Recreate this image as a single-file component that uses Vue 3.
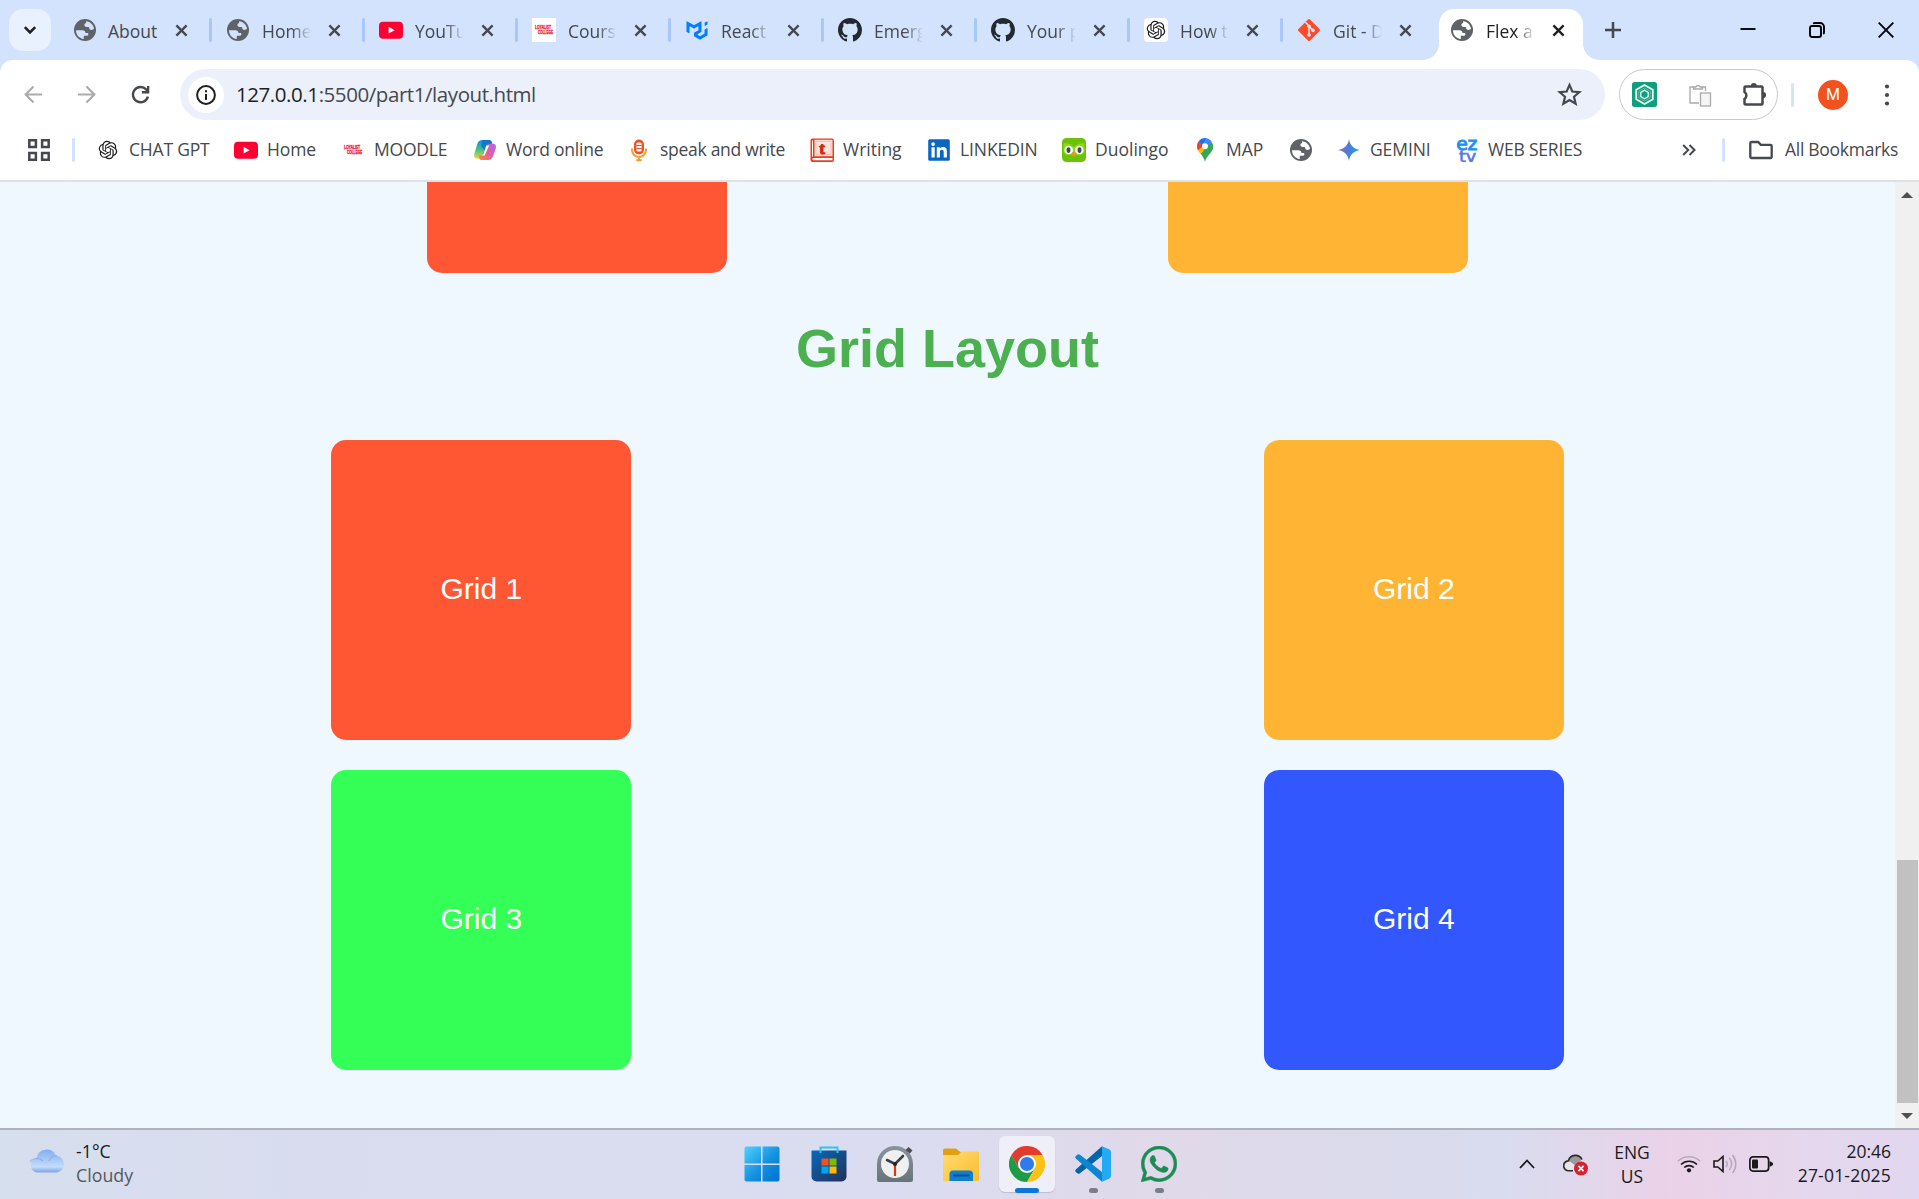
<script setup>
const tabs = [
  { icon: 'globe', title: 'About', whole: true },
  { icon: 'globe', title: 'Home' },
  { icon: 'youtube', title: 'YouTu' },
  { icon: 'college-tile', title: 'Cours' },
  { icon: 'mui', title: 'React' },
  { icon: 'github', title: 'Emerg' },
  { icon: 'github', title: 'Your p' },
  { icon: 'openai-tile', title: 'How t' },
  { icon: 'git', title: 'Git - D' },
  { icon: 'globe', title: 'Flex a', active: true },
]

const bookmarks = [
  { icon: 'openai', label: 'CHAT GPT', width: 138, fit: '-0.2px' },
  { icon: 'youtube', label: 'Home', width: 107, fit: '-0.1px' },
  { icon: 'college', label: 'MOODLE', width: 132, fit: '-0.2px' },
  { icon: 'copilot', label: 'Word online', width: 154, fit: '-0.22px' },
  { icon: 'mic', label: 'speak and write', width: 183, fit: '-0.28px' },
  { icon: 'writing', label: 'Writing', width: 117, fit: '0px' },
  { icon: 'linkedin', label: 'LINKEDIN', width: 135, fit: '-0.1px' },
  { icon: 'duolingo', label: 'Duolingo', width: 131, fit: '0px' },
  { icon: 'map', label: 'MAP', width: 96, fit: '0px' },
  { icon: 'globe', label: '', width: 48, fit: '0px' },
  { icon: 'gemini', label: 'GEMINI', width: 118, fit: '-0.1px' },
  { icon: 'eztv', label: 'WEB SERIES', width: 141, fit: '-0.2px' },
]

const cells = [
  { label: 'Grid 1', tone: 'red' },
  { label: 'Grid 2', tone: 'orange' },
  { label: 'Grid 3', tone: 'green' },
  { label: 'Grid 4', tone: 'blue' },
]

const apps = [
  { icon: 'start' },
  { icon: 'store' },
  { icon: 'clock' },
  { icon: 'folder' },
  { icon: 'chrome', state: 'active' },
  { icon: 'vscode', state: 'running' },
  { icon: 'whatsapp', state: 'running' },
]
</script>

<template>
  <div class="screen">
    <svg class="defs" width="0" height="0" aria-hidden="true">
      <defs>
        <linearGradient id="gGem" x1="0" y1="0" x2="1" y2="0">
          <stop offset="0" stop-color="#9168c0" /><stop offset=".5" stop-color="#4a7fd6" /><stop offset="1" stop-color="#1ba1e3" />
        </linearGradient>
        <linearGradient id="gWin" x1="0" y1="0" x2="1" y2="1">
          <stop offset="0" stop-color="#4fd2ff" /><stop offset=".55" stop-color="#1490df" /><stop offset="1" stop-color="#0070d0" />
        </linearGradient>
        <linearGradient id="gStore" x1="0" y1="0" x2="1" y2="1">
          <stop offset="0" stop-color="#0669bd" /><stop offset="1" stop-color="#243056" />
        </linearGradient>
        <linearGradient id="gCloud" x1="0" y1="0" x2="0" y2="1">
          <stop offset="0" stop-color="#82aef0" /><stop offset=".75" stop-color="#c3dcf9" /><stop offset="1" stop-color="#7ba2e8" />
        </linearGradient>
        <linearGradient id="gFold" x1="0" y1="0" x2="1" y2="1">
          <stop offset="0" stop-color="#ffdc73" /><stop offset="1" stop-color="#f9bd2b" />
        </linearGradient>
        <linearGradient id="gClock" x1="0" y1="0" x2="0" y2="1">
          <stop offset="0" stop-color="#8a949c" /><stop offset="1" stop-color="#69737a" />
        </linearGradient>
        <linearGradient id="gCopA" x1="0" y1="0" x2="0" y2="1">
          <stop offset="0" stop-color="#0f8fe8" /><stop offset=".5" stop-color="#3fbf8e" /><stop offset="1" stop-color="#f3d338" />
        </linearGradient>
        <linearGradient id="gCopB" x1="1" y1="0" x2="0" y2="1">
          <stop offset="0" stop-color="#a96bf0" /><stop offset=".5" stop-color="#e65c9c" /><stop offset="1" stop-color="#f98a3c" />
        </linearGradient>

        <symbol id="i-globe" viewBox="0 0 24 24">
          <circle cx="12" cy="12" r="11" fill="#5f6368" />
          <path class="cut" d="M13.100 3.200c4.200.5 7.400 3.400 7.900 7.400-.6 1-1.500 1.400-2.600 1.400-1.500 0-2.200-.9-2.200-2.200 0-.5-.4-.8-.9-.8h-1.600c-1.300 0-2.300-.8-2.300-2 0-1.100.7-1.800 1.700-2z" />
          <path class="cut" d="M3 12.200h6.300c2 0 3.200 1.100 3.200 2.800h1.900c.7 0 1 .5 1 1.100 0 .9-.5 1.600-1.400 1.600h-3.200v3.200C6.300 20.500 3 16.800 3 12.200z" />
        </symbol>
        <symbol id="i-youtube" viewBox="0 0 24 24">
          <rect y="3.700" width="24" height="17" rx="4" fill="#ff0033" /><path d="M9.600 8.800v6.800l6-3.400z" fill="#fff" />
        </symbol>
        <symbol id="i-college" viewBox="0 0 24 24">
          <g fill="#ee1c3c" font-family="Liberation Sans, sans-serif" font-weight="700" font-size="5.400" stroke="#ee1c3c" stroke-width=".35">
            <text x="3" y="11.300" textLength="16" lengthAdjust="spacingAndGlyphs">LOYALIST</text>
            <text x="6" y="16" textLength="15" lengthAdjust="spacingAndGlyphs">COLLEGE</text>
          </g>
        </symbol>
        <symbol id="i-college-tile" viewBox="0 0 24 24">
          <rect width="24" height="24" fill="#fff" /><use href="#i-college" />
        </symbol>
        <symbol id="i-mui" viewBox="-2.500 -5 41 41">
          <path fill="#007fff" d="M30.343 21.976a1 1 0 00.502-.864l.018-5.787a1 1 0 01.502-.864l3.137-1.802a1 1 0 011.498.867v10.521a1 1 0 01-.502.867l-11.839 6.8a1 1 0 01-.994.001l-9.291-5.314a1 1 0 01-.504-.868v-5.305l7.670-4.420v-5.230a1 1 0 00-1.500-.870l-5.687 3.277a1 1 0 01-.998 0L6.666 9.700a1 1 0 00-1.499.866v9.400a1 1 0 01-1.496.869l-3.166-1.810a1 1 0 01-.504-.870l.028-16.430A1 1 0 011.527.860l10.845 6.229a1 1 0 00.996 0L24.210.860a1 1 0 011.498.868v16.434a1 1 0 01-.501.867l-5.678 3.270a1 1 0 00.004 1.735l3.132 1.783a1 1 0 00.993-.002l6.685-3.839zM31 7.234a1 1 0 001.514.857l3-1.800A1 1 0 0036 5.434V1.766A1 1 0 0034.486.910l-3 1.800a1 1 0 00-.486.857v3.668z" />
        </symbol>
        <symbol id="i-github" viewBox="0 0 16 16">
          <path fill="#24292f" d="M8 0C3.580 0 0 3.580 0 8c0 3.540 2.290 6.530 5.470 7.590.4.070.55-.170.55-.380 0-.190-.010-.820-.010-1.490-2.010.370-2.530-.490-2.690-.940-.090-.230-.480-.940-.820-1.130-.280-.150-.680-.520-.010-.530.630-.010 1.080.580 1.230.820.720 1.210 1.870.870 2.330.660.070-.520.280-.870.510-1.070-1.780-.200-3.640-.890-3.640-3.950 0-.870.310-1.590.820-2.150-.080-.200-.360-1.020.080-2.120 0 0 .670-.210 2.200.820.640-.180 1.320-.270 2-.270s1.360.090 2 .270c1.530-1.040 2.200-.820 2.200-.820.440 1.100.160 1.920.080 2.120.510.560.820 1.270.820 2.150 0 3.070-1.870 3.750-3.650 3.950.290.250.540.730.540 1.480 0 1.070-.010 1.930-.010 2.200 0 .210.150.460.550.380A8.010 8.010 0 0 0 16 8c0-4.420-3.580-8-8-8z" />
        </symbol>
        <symbol id="i-openai" viewBox="-3.500 -3.500 31 31">
          <path fill="currentColor" d="M22.2819 9.8211a5.9847 5.9847 0 0 0-.5157-4.9108 6.0462 6.0462 0 0 0-6.5098-2.9A6.0651 6.0651 0 0 0 4.9807 4.1818a5.9847 5.9847 0 0 0-3.9977 2.9 6.0462 6.0462 0 0 0 .7427 7.0966 5.98 5.98 0 0 0 .511 4.9107 6.051 6.051 0 0 0 6.5146 2.9001A5.9847 5.9847 0 0 0 13.2599 24a6.0557 6.0557 0 0 0 5.7718-4.2058 5.9894 5.9894 0 0 0 3.9977-2.9001 6.0557 6.0557 0 0 0-.7475-7.0729zm-9.022 12.6081a4.4755 4.4755 0 0 1-2.8764-1.0408l.1419-.0804 4.7783-2.7582a.7948.7948 0 0 0 .3927-.6813v-6.7369l2.02 1.1686a.071.071 0 0 1 .038.052v5.5826a4.504 4.504 0 0 1-4.4945 4.4944zm-9.6607-4.1254a4.4708 4.4708 0 0 1-.5346-3.0137l.142.0852 4.783 2.7582a.7712.7712 0 0 0 .7806 0l5.8428-3.3685v2.3324a.0804.0804 0 0 1-.0332.0615L9.74 19.9502a4.4992 4.4992 0 0 1-6.1408-1.6464zM2.3408 7.8956a4.485 4.485 0 0 1 2.3655-1.9728V11.6a.7664.7664 0 0 0 .3879.6765l5.8144 3.3543-2.0201 1.1685a.0757.0757 0 0 1-.071 0l-4.8303-2.7865A4.504 4.504 0 0 1 2.3408 7.872zm16.5963 3.8558L13.1038 8.364 15.1192 7.2a.0757.0757 0 0 1 .071 0l4.8303 2.7913a4.4944 4.4944 0 0 1-.6765 8.1042v-5.6772a.79.79 0 0 0-.407-.667zm2.0107-3.0231l-.142-.0852-4.7735-2.7818a.7759.7759 0 0 0-.7854 0L9.409 9.2297V6.8974a.0662.0662 0 0 1 .0284-.0615l4.8303-2.7866a4.4992 4.4992 0 0 1 6.6802 4.66zM8.3065 12.863l-2.02-1.1638a.0804.0804 0 0 1-.038-.0567V6.0742a4.4992 4.4992 0 0 1 7.3757-3.4537l-.142.0805L8.704 5.459a.7948.7948 0 0 0-.3927.6813zm1.0976-2.3654l2.602-1.4998 2.6069 1.4998v2.9994l-2.5974 1.4997-2.6067-1.4997Z" />
        </symbol>
        <symbol id="i-openai-tile" viewBox="0 0 24 24">
          <rect width="24" height="24" rx="4" fill="#fff" /><use href="#i-openai" />
        </symbol>
        <symbol id="i-git" viewBox="0 0 24 24">
          <rect x="3.800" y="3.800" width="16.400" height="16.400" rx="1.500" transform="rotate(45 12 12)" fill="#ff4a26" />
          <path d="M8.300 4.200l3.700 3.600v9M12 8.200l4 4.200" fill="none" stroke="#dbe6fd" stroke-width="1.500" />
          <circle cx="12" cy="8.200" r="1.800" fill="#dbe6fd" /><circle cx="16" cy="12.400" r="1.800" fill="#dbe6fd" /><circle cx="12" cy="17" r="1.800" fill="#dbe6fd" />
        </symbol>
        <symbol id="i-copilot" viewBox="0 0 24 24">
          <path d="M9.500 2h6.500c1.500 0 2.300.8 2.800 2.300l.7 2.700h-3.200c-1.700 0-2.500 1-3 2.600L10.800 18c-.5 1.700-1.400 2.500-3 2.500H4.500C1.700 20.500.6 18.500 1.400 15.500L4.300 6C5 3.400 6.800 2 9.500 2z" fill="url(#gCopA)" />
          <path d="M9.500 2h6.500c1.500 0 2.300.8 2.800 2.300l.7 2.700h-3.200c-1.700 0-2.500 1-3 2.600l-1 3.400L8 8z" fill="#1268c9" opacity=".75" />
          <path d="M14.500 22H9c-1.600 0-2.400-.9-2.900-2.300l-.6-2.200h2.700c1.700 0 2.500-.8 3-2.500l1.900-6.300c.6-1.900 1.700-2.900 3.600-2.900h3c2.800 0 3.900 1.900 3 5l-2.500 7c-.9 2.800-2.700 4.200-5.700 4.200z" fill="url(#gCopB)" />
          <path d="M13.200 7.500h3l-4.600 10H8c1.700 0 2.500-.8 3-2.500z" fill="#fff" />
        </symbol>
        <symbol id="i-mic" viewBox="0 0 24 24">
          <rect x="7" y="1.500" width="10" height="15" rx="5" fill="#f4511e" />
          <rect x="9.400" y="4.500" width="5.200" height="9" rx="1.600" fill="#fff" />
          <path d="M9.400 7.500h5.200M9.400 10.500h5.200" stroke="#f4511e" stroke-width="1.200" />
          <path d="M5 10.500v1.500a7 7 0 0 0 14 0v-1.500M12 18.500v4M9.300 22.300h5.400" stroke="#f99b32" stroke-width="2" fill="none" />
        </symbol>
        <symbol id="i-writing" viewBox="0 0 24 24">
          <rect x=".5" y=".5" width="23.500" height="23.500" rx="2" fill="#ef3a1b" />
          <path d="M4.500 1.800h18v16.400h-18z" fill="#fbe3dd" /><path d="M3.500 20h19v2.200H3.300c-1.300 0-1.300-2.200.2-2.200z" fill="#fff" /><path d="M2 2.500h1v16H2z" fill="#fff" />
          <path d="M6 3.500h15v13H6z" fill="none" stroke="#f9b9aa" stroke-width=".8" />
          <text x="9.200" y="15.500" font-family="Liberation Serif, serif" font-weight="700" font-size="17" fill="#d6240c" stroke="#d6240c">t</text>
        </symbol>
        <symbol id="i-linkedin" viewBox="0 0 24 24">
          <rect x="1.200" y="1.200" width="21.600" height="21.600" rx="1.500" fill="#0a66c2" />
          <path d="M4.500 9.300h3.200v10.200H4.500zM9.800 9.300h3v1.400c.6-1 1.700-1.700 3.300-1.700 3.100 0 3.800 2 3.800 4.800v5.700h-3.200v-5c0-1.400-.1-2.700-1.800-2.700s-2 1.300-2 2.700v5H9.800z" fill="#fff" /><circle cx="6.100" cy="6.100" r="1.850" fill="#fff" />
        </symbol>
        <symbol id="i-duolingo" viewBox="0 0 24 24">
          <rect width="24" height="24" rx="4.500" fill="#6cc204" /><path d="M1.500 5.500C5 4.500 9 5.500 12 9c3-3.500 7-4.500 10.500-3.500v9c-3 4-8 3-10.500 1-2.500 2-7.500 3-10.500-1z" fill="#86db1b" />
          <ellipse cx="6.700" cy="12" rx="4.300" ry="4.300" fill="#fff" /><ellipse cx="17.300" cy="12" rx="4.300" ry="4.300" fill="#fff" />
          <ellipse cx="6.500" cy="12.100" rx="2" ry="2.800" fill="#43484c" /><ellipse cx="17.500" cy="12.100" rx="2" ry="2.800" fill="#43484c" />
          <path d="M9.300 15.300q2.700-2.200 5.400 0-.7 3-2.700 3t-2.700-3z" fill="#f5921e" />
        </symbol>
        <symbol id="i-map" viewBox="0 0 24 24">
          <path d="M12 24c-.8-3.200-2-5.500-4.500-8.300L17.500 4a8 8 0 0 1 1.500 8.800C17 16.500 13.200 18.500 12 24z" fill="#34a853" />
          <path d="M7.500 15.700C5 12.800 3.700 11 4 8l8.500-2.500 2.300 2.500z" fill="#fbbc04" />
          <path d="M4 8c0-1.800.7-3.600 1.800-4.900l5 4.300L5 12.300C4.300 11 4 9.500 4 8z" fill="#ea4335" />
          <path d="M5.800 3.100a8.100 8.100 0 0 1 8.600-2.700L9.200 7z" fill="#1a73e8" /><path d="M14.400.4c2 .6 3.700 2 4.600 4L13.500 9.800 9 7z" fill="#4285f4" />
          <path d="M19 4.400a8 8 0 0 1-.2 8.400L12 15l-1.500-3z" fill="#34a853" />
          <circle cx="12" cy="8.300" r="3" fill="#fff" />
        </symbol>
        <symbol id="i-gemini" viewBox="0 0 24 24">
          <path d="M12 1c.7 6 5 10.300 11 11-6 .7-10.300 5-11 11-.7-6-5-10.300-11-11 6-.7 10.300-5 11-11z" fill="url(#gGem)" />
        </symbol>
        <symbol id="i-eztv" viewBox="0 0 24 24">
          <g font-family="DejaVu Sans, sans-serif" font-size="18">
            <text x="1.200" y="11.500" fill="#1b8ff5" stroke="#1b8ff5" stroke-width=".9" textLength="21" lengthAdjust="spacingAndGlyphs">ez</text>
            <text x="4" y="23.500" font-size="16" textLength="17" lengthAdjust="spacingAndGlyphs" fill="#5577e8" stroke="#5577e8" stroke-width=".6">tv</text>
          </g>
        </symbol>

        <symbol id="i-start" viewBox="0 0 36 36">
          <path d="M2.500.5H17v17H.5v-15a2 2 0 0 1 2-2zM18.500.5h15a2 2 0 0 1 2 2v15h-17zM.5 19H17v16.500H2.500a2 2 0 0 1-2-2zM18.500 19h17v14.500a2 2 0 0 1-2 2h-15z" fill="url(#gWin)" />
        </symbol>
        <symbol id="i-store" viewBox="0 0 36 36">
          <path d="M.5 4.500h35v26a5 5 0 0 1-5 5h-25a5 5 0 0 1-5-5z" fill="url(#gStore)" />
          <path d="M9.500 7V1.500h17V7" fill="none" stroke="#2fc4f4" stroke-width="2" />
          <path d="M10.500 12.500h7v7h-7z" fill="#f25022" /><path d="M18.500 12.500h7v7h-7z" fill="#7fba00" /><path d="M10.500 20.500h7v7h-7z" fill="#00a4ef" /><path d="M18.500 20.500h7v7h-7z" fill="#ffb900" />
        </symbol>
        <symbol id="i-clock" viewBox="0 0 36 36">
          <path d="M0 18a18 18 0 0 1 36 0v16a2 2 0 0 1-2 2H2a2 2 0 0 1-2-2z" fill="url(#gClock)" />
          <path d="M28.500 4l3-3 4 3.500-2.700 3z" fill="#4b4f52" />
          <circle cx="18" cy="18" r="14" fill="#eef0f1" />
          <path d="M18 18v12" stroke="#d83b01" stroke-width="2.200" /><path d="M10 14l8 4 8-8" fill="none" stroke="#3b3f42" stroke-width="2.600" stroke-linecap="round" /><circle cx="18" cy="18" r="2" fill="#222" />
        </symbol>
        <symbol id="i-folder" viewBox="0 0 36 36">
          <path d="M0 4.500a2 2 0 0 1 2-2h11l5 4v6H0z" fill="#e0a010" />
          <path d="M0 9h15l4-3.500h15.500a1.500 1.500 0 0 1 1.500 1.500v26.500a1.500 1.500 0 0 1-1.500 1.500h-33A1.500 1.500 0 0 1 0 33.500z" fill="url(#gFold)" />
          <path d="M6.500 35v-7a3.500 3.500 0 0 1 3.500-3.500h16.500A3.500 3.500 0 0 1 30 28v7z" fill="#0f7fd0" /><path d="M11 29.500h14.500" stroke="#0a4f92" stroke-width="2" stroke-linecap="round" />
        </symbol>
        <symbol id="i-chrome" viewBox="0 0 36 36">
          <path d="M2.400 9a18 18 0 0 0 15.600 27l7.800-13.500L18 18l-7.800 4.500z" fill="#1f9a47" />
          <path d="M33.600 9A18 18 0 0 1 18 36l7.800-13.500L18 9z" fill="#fbc116" />
          <path d="M2.400 9a18 18 0 0 1 31.200 0H18v9l-7.800 4.500z" fill="#e33b2e" />
          <circle cx="18" cy="18" r="9" fill="#fff" /><circle cx="18" cy="18" r="7.100" fill="#2f7bee" />
        </symbol>
        <symbol id="i-vscode" viewBox="0 0 36 36">
          <path d="M27 .2L.8 23.500a2 2 0 0 0 0 2.600l1.200 1a2.400 2.400 0 0 0 3 .1L27 10z" fill="#0065a9" />
          <path d="M27 35.800L.8 12.500a2 2 0 0 1 0-2.600L2 8.900a2.400 2.400 0 0 1 3-.1L27 26z" fill="#0d86cf" />
          <path d="M27 .2L34.500 3.600A2.600 2.600 0 0 1 36 6v24a2.600 2.600 0 0 1-1.500 2.400L27 35.800z" fill="#24a9f2" />
        </symbol>
        <symbol id="i-whatsapp" viewBox="0 0 24 24">
          <path fill="#1c8b54" stroke="#1c8b54" stroke-width=".3" d="M17.472 14.382c-.297-.149-1.758-.867-2.030-.967-.273-.099-.471-.148-.670.150-.197.297-.767.966-.940 1.164-.173.199-.347.223-.644.075-.297-.150-1.255-.463-2.390-1.475-.883-.788-1.480-1.761-1.653-2.059-.173-.297-.018-.458.130-.606.134-.133.298-.347.446-.520.149-.174.198-.298.298-.497.099-.198.050-.371-.025-.520-.075-.149-.669-1.612-.916-2.207-.242-.579-.487-.500-.669-.510-.173-.008-.371-.010-.570-.010-.198 0-.520.074-.792.372-.272.297-1.040 1.016-1.040 2.479 0 1.462 1.065 2.875 1.213 3.074.149.198 2.096 3.200 5.077 4.487.709.306 1.262.489 1.694.625.712.227 1.360.195 1.871.118.571-.085 1.758-.719 2.006-1.413.248-.694.248-1.289.173-1.413-.074-.124-.272-.198-.570-.347m-5.421 7.403h-.004a9.870 9.870 0 01-5.031-1.378l-.361-.214-3.741.982.998-3.648-.235-.374a9.860 9.860 0 01-1.510-5.260c.001-5.450 4.436-9.884 9.888-9.884 2.640 0 5.122 1.030 6.988 2.898a9.825 9.825 0 012.893 6.994c-.003 5.450-4.437 9.884-9.885 9.884m8.413-18.297A11.815 11.815 0 0012.050 0C5.495 0 .160 5.335.157 11.892c0 2.096.547 4.142 1.588 5.945L.057 24l6.305-1.654a11.882 11.882 0 005.683 1.448h.005c6.554 0 11.890-5.335 11.893-11.893a11.821 11.821 0 00-3.480-8.413z" />
        </symbol>
      </defs>
    </svg>

    <header class="tabstrip">
      <button class="tab-search">
        <svg width="14" height="10" viewBox="0 0 14 10"><path d="M1.800 2.200L7 7.400l5.200-5.200" fill="none" stroke="#1f1f1f" stroke-width="2.600" /></svg>
      </button>
      <div class="tabs">
        <div v-for="(tab, i) in tabs" :key="i" class="tab" :class="{ active: tab.active, whole: tab.whole }">
          <svg class="fav"><use :href="'#i-' + tab.icon" /></svg>
          <span class="tab-title">{{ tab.title }}</span>
          <svg class="tab-close" viewBox="0 0 14 14"><path d="M1.500 1.500l11 11M12.500 1.500l-11 11" /></svg>
          <i class="tab-sep"></i>
        </div>
      </div>
      <svg class="new-tab" viewBox="0 0 16 16"><path d="M8 0v16M0 8h16" stroke="#45484d" stroke-width="2.500" /></svg>
      <div class="window-controls">
        <svg viewBox="0 0 16 16"><path d="M.5 7h15" /></svg>
        <svg viewBox="0 0 16 16"><rect x="1" y="4" width="11" height="11" rx="2" /><path d="M4 1.500Q5 1 6.500 1H11a4 4 0 0 1 4 4v5q0 1.500-.7 2" /></svg>
        <svg viewBox="0 0 16 16"><path d="M.7.7l14.600 14.600M15.300.7L.7 15.300" /></svg>
      </div>
    </header>

    <div class="chrome-panel">
      <div class="toolbar">
        <svg class="nav dim" viewBox="0 0 20 20"><path d="M19 10H2M10 1.500L1.700 10l8.300 8.500" /></svg>
        <svg class="nav dim" viewBox="0 0 20 20"><path d="M1 10h17M10 1.500l8.300 8.500-8.300 8.500" /></svg>
        <svg class="nav" viewBox="0 0 20 20"><path d="M17.800 12.300A8 8 0 1 1 16 4.700L17.800 6.800M18 1v6.600h-6.500" stroke-width="2.500" /></svg>
        <div class="omnibox">
          <span class="site-info">
            <svg width="20" height="20" viewBox="0 0 20 20"><circle cx="10" cy="10" r="8.900" fill="none" stroke="#1f1f1f" stroke-width="2" /><path d="M10 9v6M10 5.200v2" stroke="#1f1f1f" stroke-width="2" /></svg>
          </span>
          <span class="url"><b>127.0.0.1</b>:5500/part1/layout.html</span>
          <svg class="star" viewBox="0 0 24 24"><path d="M12 2.800l2.700 6.300 6.800.6-5.200 4.500 1.600 6.700L12 17.300l-5.900 3.600 1.600-6.700-5.200-4.500 6.800-.6z" /></svg>
        </div>
        <div class="extensions">
          <svg width="25" height="25" viewBox="0 0 25 25">
            <rect width="25" height="25" rx="2.500" fill="#109f7c" />
            <g fill="none" stroke="#e9f7f2"><path d="M12.500 3l8.300 4.700v9.600L12.500 22l-8.300-4.700V7.700z" stroke-width="1.800" /><path d="M12.500 8.300l3.700 2.100v4.200l-3.700 2.100-3.700-2.100v-4.200z" stroke-width="1.300" /><path d="M12.500 6l5.700 3.200v6.600L12.500 19l-5.700-3.200V9.200z" stroke-width=".6" opacity=".6" /></g>
          </svg>
          <svg class="clip" width="24" height="24" viewBox="0 0 24 24" fill="none" stroke="#a9a9a9" stroke-width="1.300">
            <path d="M11 20H2V4h4M14 4h3.500v4" /><path d="M5.500 6V4h2.200a2.500 2.500 0 0 1 4.600 0h2.200v2z" /><rect x="12.500" y="10" width="10" height="13" fill="#f5f5f5" />
          </svg>
          <svg width="26" height="26" viewBox="0 0 26 26">
            <path d="M4.500 4.500h16a1 1 0 0 1 1 1v16a1 1 0 0 1-1 1h-16a1 1 0 0 1-1-1V17a4.200 4.200 0 0 0 0-7V5.500a1 1 0 0 1 1-1z" fill="none" stroke="#45484d" stroke-width="2.500" />
            <path d="M9.800 4a3 3 0 0 1 6 0zM22 10a3 3 0 0 1 0 6.200z" fill="#45484d" />
          </svg>
        </div>
        <i class="divider"></i>
        <span class="avatar">M</span>
        <svg class="kebab" viewBox="0 0 6 24"><circle cx="3" cy="3.500" r="2.100" /><circle cx="3" cy="12" r="2.100" /><circle cx="3" cy="20.500" r="2.100" /></svg>
      </div>

      <div class="bookmarks">
        <svg class="apps-grid" viewBox="0 0 22 22"><path d="M1.300 1.300h6.600v6.600H1.300zM14.100 1.300h6.600v6.600h-6.600zM1.300 14.100h6.600v6.600H1.300zM14.100 14.100h6.600v6.600h-6.600z" fill="none" stroke="#45484d" stroke-width="2.500" /></svg>
        <i class="divider"></i>
        <div class="bookmark-list">
          <div v-for="(b, i) in bookmarks" :key="i" class="bookmark" :style="{ width: b.width + 'px', letterSpacing: b.fit }">
            <svg class="fav"><use :href="'#i-' + b.icon" /></svg>
            <span>{{ b.label }}</span>
          </div>
        </div>
        <svg class="more" viewBox="0 0 14 12"><path d="M1.200 1l5 5-5 5M7.500 1l5 5-5 5" fill="none" stroke="#45484d" stroke-width="2" /></svg>
        <i class="divider"></i>
        <svg class="all-icon" viewBox="0 0 24 20"><path d="M2.500 2h6.700l2.600 2.800h9.700a1.200 1.200 0 0 1 1.200 1.200v10.800a1.200 1.200 0 0 1-1.200 1.200h-19a1.200 1.200 0 0 1-1.200-1.200V3.200A1.200 1.200 0 0 1 2.500 2z" fill="none" stroke="#45484d" stroke-width="2.300" /></svg>
        <span class="all-label">All Bookmarks</span>
      </div>
    </div>

    <main class="viewport">
      <div class="page">
        <section class="flex-row">
          <div class="box clipped red"></div>
          <div class="box clipped orange"></div>
        </section>
        <h1>Grid Layout</h1>
        <section class="grid">
          <div v-for="c in cells" :key="c.label" class="box" :class="c.tone">{{ c.label }}</div>
        </section>
      </div>
      <div class="scrollbar">
        <i class="arrow up"></i>
        <i class="thumb"></i>
        <i class="arrow down"></i>
      </div>
    </main>

    <footer class="taskbar">
      <div class="weather">
        <svg width="36" height="24" viewBox="0 0 36 24"><path d="M7.500 23.500a7.500 7.500 0 0 1 0-14.500 10.300 10.300 0 0 1 19.400-2.500A8.600 8.600 0 0 1 28 23.500z" fill="url(#gCloud)" /><path d="M1 13c2-4 9-5 13-1" fill="none" stroke="#7ba6ee" stroke-width="1.200" opacity=".6" /><path d="M20 12c1.500-4 5-5.700 8-5.400" fill="none" stroke="#7ba6ee" stroke-width="1.200" opacity=".6" /></svg>
        <div class="weather-text"><span>-1°C</span><span class="soft">Cloudy</span></div>
      </div>
      <div class="apps">
        <div v-for="a in apps" :key="a.icon" class="app">
          <span class="tile" :class="a.state">
            <svg><use :href="'#i-' + a.icon" /></svg>
          </span>
        </div>
      </div>
      <div class="tray">
        <svg class="t-chev" viewBox="0 0 16 10"><path d="M1 9l7-7.500L15 9" fill="none" stroke="#1a1a1a" stroke-width="1.800" /></svg>
        <svg class="t-cloud" viewBox="0 0 26 22">
          <path d="M6 16.500a5.200 5.200 0 0 1-.6-10A7.300 7.300 0 0 1 19 5.500" fill="#9a9a9a" /><path d="M6 16.500c-3-.5-5-2-5-5 1-3 4-4 6-4l8 6-2 3z" fill="#e6e6ea" />
          <path d="M10 16.800H6a5 5 0 0 1-.6-10.100A7.300 7.300 0 0 1 19 5.500" fill="none" stroke="#2b2b2b" stroke-width="1.600" />
          <circle cx="18" cy="14.500" r="7" fill="#dc1f2e" /><path d="M15.400 11.900l5.200 5.200M20.600 11.900l-5.200 5.200" stroke="#fff" stroke-width="1.700" />
        </svg>
        <div class="lang"><span>ENG</span><span>US</span></div>
        <svg class="t-wifi" viewBox="0 0 24 18" fill="none">
          <path d="M.8 6.300a16 16 0 0 1 22.400 0" stroke="#b9a8bb" stroke-width="1.500" /><path d="M4 9.500a11.500 11.500 0 0 1 16 0M7.200 12.500a7 7 0 0 1 9.600 0" stroke="#1a1a1a" stroke-width="1.700" /><circle cx="12" cy="15.300" r="2.100" fill="#1a1a1a" />
        </svg>
        <svg class="t-vol" viewBox="0 0 25 20" fill="none">
          <path d="M1 7v6h3.800l5.200 4.500v-15L4.800 7z" stroke="#1a1a1a" stroke-width="1.600" /><path d="M13 7a5 5 0 0 1 0 6M16.300 4a9 9 0 0 1 0 12M19.500 1a14 14 0 0 1 0 18" stroke="#b3a7bb" stroke-width="1.500" />
        </svg>
        <svg class="t-bat" viewBox="0 0 24 16" fill="none">
          <rect x=".9" y=".9" width="18.700" height="14.200" rx="3" stroke="#1a1a1a" stroke-width="1.700" /><rect x="3" y="3.500" width="6" height="9" rx="1" fill="#1a1a1a" /><path d="M20.500 5l3.500 2v2l-3.500 2z" fill="#1a1a1a" />
        </svg>
        <div class="when"><span>20:46</span><span class="date">27-01-2025</span></div>
      </div>
    </footer>
  </div>
</template>

<style>
html,
body {
  margin: 0;
  overflow: hidden;
}
</style>

<style scoped>
.screen {
  width: 1919px;
  height: 1199px;
  display: flex;
  flex-direction: column;
  background: #d3e2fd;
  font-family: 'Open Sans', 'Noto Sans', sans-serif;
  font-weight: 370;
  font-size: 17.500px;
  color: #45484d;
  overflow: hidden;
  --cut: #fff;
}
.defs { position: absolute; }
svg { flex: none; display: block; }
.cut { fill: var(--cut); }
.fav { width: 24px; height: 24px; color: #1f1f1f; }

/* tab strip */
.tabstrip { height: 60px; display: flex; align-items: flex-start; flex: none; --cut: #d3e2fd; }
.tab-search {
  margin: 9px 0 0 9px;
  width: 42px;
  height: 42px;
  border: 0;
  padding: 0;
  border-radius: 14px;
  background: #e9f0fe;
  display: flex;
  align-items: center;
  justify-content: center;
}
.tabs { display: flex; margin-left: 10px; height: 60px; }
.tab {
  width: 153px;
  box-sizing: border-box;
  padding: 9px 2px 9px 12px;
  display: flex;
  align-items: center;
}
.tab-title {
  margin-left: 12px;
  width: 54px;
  height: 28px;
  line-height: 29px;
  padding-top: 2px;
  white-space: nowrap;
  -webkit-mask-image: linear-gradient(90deg, #000 30px, transparent 49px);
  mask-image: linear-gradient(90deg, #000 30px, transparent 49px);
}
.tab.whole .tab-title { margin-left: 11px; width: 55px; -webkit-mask-image: none; mask-image: none; }
.tab-close { width: 13px; height: 13px; margin-left: 12px; }
.tab-close path { stroke: #45484d; stroke-width: 2.500; fill: none; }
.tab-sep { width: 3px; height: 24px; border-radius: 2px; background: #a8c7fa; margin-left: auto; }
.tab:nth-child(9) .tab-sep { visibility: hidden; }
.tab.active {
  width: 144px;
  margin-left: 1px;
  padding-left: 11px;
  height: 51px;
  margin-top: 9px;
  padding-top: 0;
  background: #fff;
  border-radius: 15px 15px 0 0;
  position: relative;
  color: #1f1f1f;
  --cut: #fff;
}
.tab.active .tab-close path { stroke: #1f1f1f; }
.tab.active .tab-sep { display: none; }
.tab.active::before,
.tab.active::after {
  content: '';
  position: absolute;
  bottom: 0;
  width: 16px;
  height: 16px;
}
.tab.active::before { left: -16px; background: radial-gradient(circle at 0 0, transparent 15.500px, #fff 16px); }
.tab.active::after { right: -16px; background: radial-gradient(circle at 100% 0, transparent 15.500px, #fff 16px); }
.new-tab { width: 16px; height: 16px; margin: 22px 0 0 22px; }
.window-controls { margin-left: auto; display: flex; gap: 53px; padding: 22px 25px 0 0; }
.window-controls svg { width: 16px; height: 16px; fill: none; stroke: #000; stroke-width: 1.900; }

/* toolbar and bookmarks */
.chrome-panel {
  height: 120px;
  flex: none;
  background: #fff;
  border-radius: 13px 13px 0 0;
  border-bottom: 2px solid #dfe1e5;
}
.toolbar { display: flex; align-items: center; height: 69px; padding-left: 24px; }
.nav { width: 19px; height: 19px; margin-right: 34px; fill: none; stroke: #45484d; stroke-width: 2.200; }
.nav.dim { stroke: #a9abad; }
.nav:nth-child(2) { margin-right: 35px; }
.nav:nth-child(3) { margin-right: 30px; }
.omnibox {
  width: 1425px;
  height: 51px;
  box-sizing: border-box;
  border-radius: 26px;
  background: #ebf0fa;
  display: flex;
  align-items: center;
  padding: 0 23px 0 8px;
}
.site-info {
  width: 36px;
  height: 36px;
  border-radius: 50%;
  background: #fff;
  display: flex;
  align-items: center;
  justify-content: center;
}
.url { margin-left: 12px; font-size: 20.500px; letter-spacing: -0.43px; color: #45484d; line-height: 51px; }
.url b { font-weight: inherit; color: #1f1f1f; }
.star { width: 25px; height: 25px; margin-left: auto; fill: none; stroke: #45484d; stroke-width: 2.100; }
.extensions {
  width: 159px;
  height: 51px;
  box-sizing: border-box;
  margin-left: 14px;
  border: 1.500px solid #c7c9cc;
  border-radius: 26px;
  display: flex;
  align-items: center;
  justify-content: space-between;
  padding: 0 10px 0 12px;
}
.clip { margin-left: 1px; }
.divider { width: 3px; height: 24px; border-radius: 2px; background: #d3e2fd; flex: none; }
.toolbar .divider { margin-left: 13px; }
.avatar {
  width: 30px;
  height: 30px;
  margin-left: 24px;
  border-radius: 50%;
  background: #f4511e;
  color: #fff;
  font: 16px/30px Roboto, sans-serif;
  text-align: center;
}
.kebab { width: 6px; height: 24px; margin-left: 36px; fill: #45484d; }
.bookmarks { height: 42px; display: flex; align-items: center; padding-left: 28px; white-space: nowrap; }
.apps-grid { width: 22px; height: 22px; margin-right: 22px; }
.bookmark-list { display: flex; margin-left: 21px; width: 1500px; }
.bookmark { display: flex; align-items: center; gap: 9px; flex: none; line-height: 24px; }
.bookmark span,
.all-label { margin-bottom: 2px; }
.more { width: 14px; height: 12px; margin-left: 86px; }
.more + .divider { margin-left: 26px; }
.all-icon { width: 24px; height: 20px; margin-left: 24px; }
.all-label { margin-left: 12px; letter-spacing: -0.28px; }

/* page */
.viewport { flex: 1; display: flex; background: #f0f8ff; min-height: 0; }
.page { width: 1895px; font-family: 'Liberation Sans', Arial, sans-serif; font-weight: 400; }
.flex-row { display: flex; justify-content: center; gap: 441px; }
.box {
  width: 300px;
  height: 300px;
  box-sizing: border-box;
  padding-bottom: 2px;
  border-radius: 15px;
  display: flex;
  align-items: center;
  justify-content: center;
  color: #fff;
  font-size: 30px;
}
.box.clipped { height: 91px; border-radius: 0 0 15px 15px; }
.red { background: #ff5733; }
.orange { background: #ffb533; }
.green { background: #33ff57; }
.blue { background: #3357ff; }
h1 { margin: 44px 0 0; height: 123px; font-size: 54px; line-height: 62px; font-weight: 700; color: #4caf50; text-align: center; }
.grid { display: grid; grid-template-columns: 1fr 1fr; gap: 30px; padding: 0 30px; justify-items: center; }
.scrollbar { width: 24px; background: #f0f0f0; display: flex; flex-direction: column; align-items: center; }
.arrow { border: 6px solid transparent; width: 0; height: 0; }
.arrow.up { border-bottom-color: #505050; border-top: 0; margin-top: 10px; }
.arrow.down { border-top-color: #505050; border-bottom: 0; margin-top: 10px; }
.thumb { width: 21px; height: 243px; background: #c1c1c1; margin: 662px 0 0 1px; }

/* taskbar */
.taskbar {
  height: 71px;
  flex: none;
  box-sizing: border-box;
  border-top: 2px solid #b0b1bf;
  padding-bottom: 2px;
  display: flex;
  align-items: center;
  color: #1a1a1a;
  background: linear-gradient(90deg, #d6dfee 0, #d9dcef 300px, #dbdcf1 900px, #e0d9e9 1180px, #dadbec 1400px, #d9dcef 1500px, #ead2e8 1670px, #e5d7ed 1800px, #e1d7f0 1919px);
}
.taskbar span { line-height: 24px; }
.weather { display: flex; width: 728px; padding-left: 29px; box-sizing: border-box; }
.weather > svg { margin-top: 10px; }
.weather-text { display: flex; flex-direction: column; margin-left: 11px; padding-bottom: 2px; font-size: 17.800px; }
.soft { color: #55585f; }
.apps { display: flex; }
.app { width: 66px; display: flex; justify-content: center; }
.app:nth-child(-n + 2) { width: 67px; }
.tile { width: 56px; height: 56px; border-radius: 6px; display: flex; align-items: center; justify-content: center; position: relative; }
.tile svg { width: 36px; height: 36px; }
.tile.active { background: #eeeff8; box-shadow: 0 1px 1px rgba(90, 90, 120, 0.25); }
.tile.active::after,
.tile.running::after {
  content: '';
  position: absolute;
  bottom: -1px;
  width: 9px;
  height: 5px;
  border-radius: 3px;
  background: #7d7d88;
}
.tile.active::after { width: 24px; background: #0a78d4; }
.tray { margin-left: auto; width: 400px; display: flex; align-items: center; }
.t-chev { width: 16px; height: 10px; }
.t-cloud { width: 26px; height: 22px; margin-left: 28px; margin-top: 3px; }
.lang { width: 60px; margin-left: 13px; display: flex; flex-direction: column; align-items: center; }
.t-wifi { width: 24px; height: 18px; margin-left: 15px; }
.t-vol { width: 25px; height: 20px; margin-left: 12px; }
.t-bat { width: 24px; height: 16px; margin-left: 11px; }
.when { flex: 1; display: flex; flex-direction: column; align-items: flex-end; padding: 0 28px 2px 0; }
.date { letter-spacing: 0.2px; }
</style>
